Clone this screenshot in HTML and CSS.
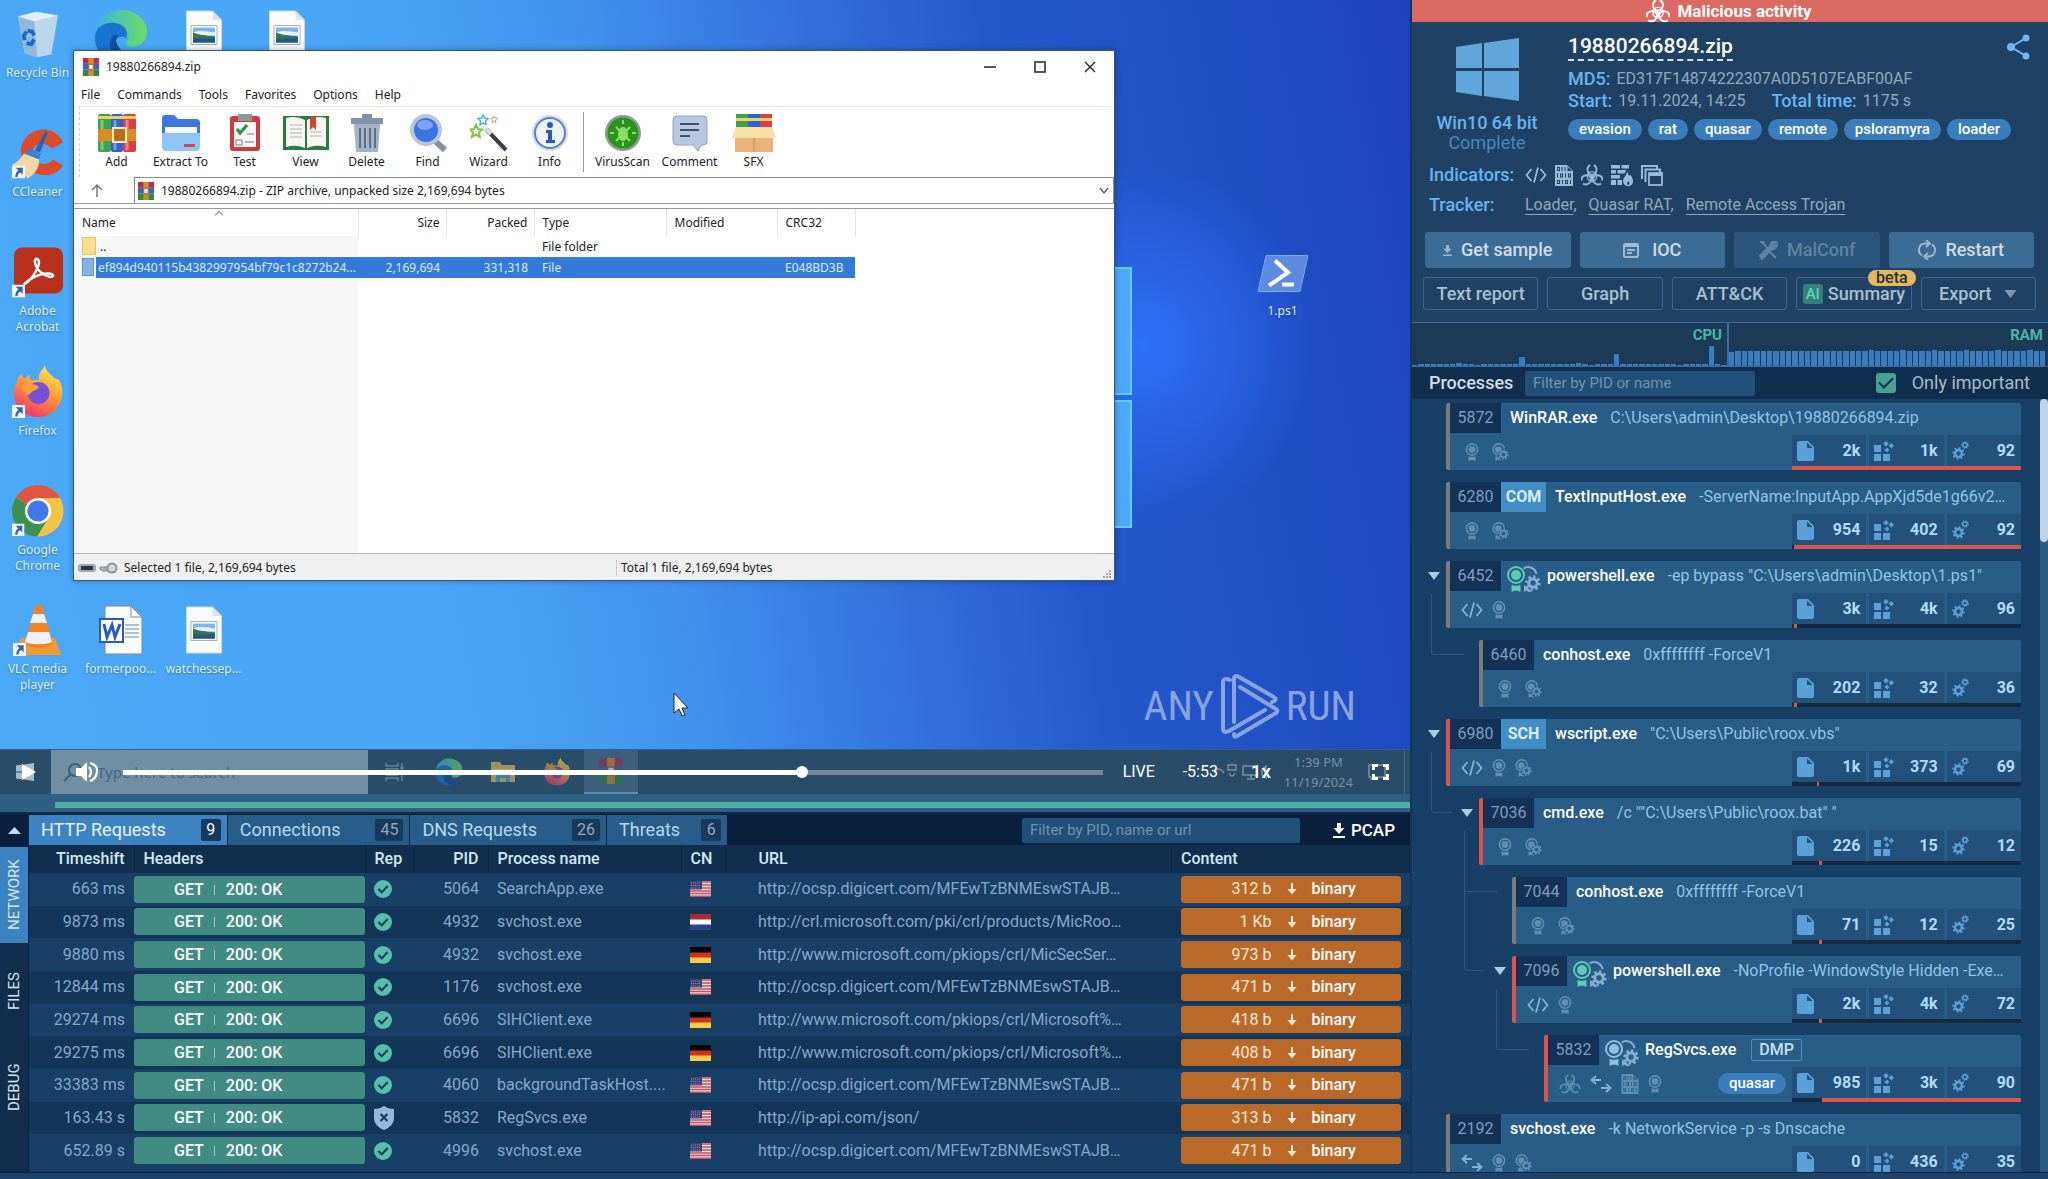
FILE: index.html
```html
<!DOCTYPE html>
<html lang="en">
<head>
    <meta charset="UTF-8">
    <meta name="viewport" content="width=device-width,initial-scale=1">
    <title>19880266894.zip - Malicious activity</title>
    <link rel="stylesheet" href="styles.css">
</head>
<body>
    <!-- shared icons -->
    <svg class="sprite" aria-hidden="true">
        <symbol id="i-medal" viewBox="0 0 14 18">
            <circle cx="7" cy="6.5" r="5.6" fill="none" stroke="currentColor" stroke-width="1.6"/>
            <circle cx="7" cy="6.5" r="3.4" fill="currentColor"/>
            <path d="M3.5 13.2 7 14l3.500-.8V18l-1.500-.8H5L3.500 18z" fill="currentColor"/>
        </symbol>
        <symbol id="i-gear" viewBox="0 0 16 16">
            <circle cx="8" cy="8" r="4.200" fill="none" stroke="currentColor" stroke-width="3"/>
            <circle cx="8" cy="8" r="6.400" fill="none" stroke="currentColor" stroke-width="2.600" pathLength="16" stroke-dasharray="1 1"/>
        </symbol>
        <symbol id="i-medal-gear" viewBox="0 0 17 18">
            <path d="M6 12A5.600 5.600 0 1 1 12.300 5.500" fill="none" stroke="currentColor" stroke-width="1.600"/>
            <path d="M6.500 3.200a3.400 3.400 0 0 1 3.400 2.600L6.300 10A3.400 3.400 0 0 1 6.500 3.200zM3.500 13.500h2.200l1.500 2 1.300 1 .5 1.500L7 17H5l-1.500 1z" fill="currentColor"/>
            <use href="#i-gear" x="6" y="6" width="11" height="11"/>
        </symbol>
        <symbol id="i-signed" viewBox="0 0 34 28">
            <circle cx="9" cy="10" r="8" fill="none" stroke="currentColor" stroke-width="2"/>
            <circle cx="9" cy="10" r="5" fill="currentColor"/>
            <path d="M4.500 20 9 21l4.500-1v7L11 25.800H7L4.500 27z" fill="currentColor"/>
            <g class="signed-gear">
                <path d="M16.500 3.500A8.500 8.500 0 0 1 29.500 9" fill="none" stroke="currentColor" stroke-width="2"/>
                <path d="M17 20l4 3 4 4h-4l-1-1.500L17 27z" fill="currentColor"/>
                <use href="#i-gear" x="18" y="10" width="16" height="16"/>
            </g>
        </symbol>
        <symbol id="i-code" viewBox="0 0 22 18">
            <path d="M6.500 3 1.500 9l5 6M15.500 3l5 6-5 6M13 1.500l-4 15" fill="none" stroke="currentColor" stroke-width="1.800"/>
        </symbol>
        <symbol id="i-arrows" viewBox="0 0 22 18">
            <path d="M6 1 1.500 5 6 9M2 5h9M16 9l4.500 4-4.500 4M20 13h-9" fill="none" stroke="currentColor" stroke-width="1.800"/>
        </symbol>
        <symbol id="i-binary" viewBox="0 0 18 21">
            <path fill-rule="evenodd" d="M0 0h12l6 6v15H0zM2 2v4h3V2zM6.500 2v4h1V2zM9.500 2v4h1V2zM2 8.500v4h1v-4zM5 8.500v4h3v-4zM10 8.500v4h1v-4zM13 8.500v4h3v-4zM2 15v4h3v-4zM7 15v4h1v-4zM10 15v4h3v-4zM15 15v4h1v-4zM3 3h1v2H3zM6 9.500h1v2H6zM14 9.500h1v2h-1zM3 16h1v2H3zM11 16h1v2h-1zM12.500 1.500V6H17z" fill="currentColor"/>
        </symbol>
        <symbol id="i-bio" viewBox="0 0 24 24">
            <g fill="none" stroke="currentColor">
                <path id="bio-arm" d="M10.200 1.200A5.300 5.300 0 0 0 7.200 7c.3 2.600 2.300 4.600 4.800 4.600S16.500 9.600 16.800 7a5.300 5.300 0 0 0-3-5.800" stroke-width="2"/>
                <use href="#bio-arm" transform="rotate(120 12 13.500)"/>
                <use href="#bio-arm" transform="rotate(240 12 13.500)"/>
                <circle cx="12" cy="13.500" r="5.200" stroke-width="1.300"/>
            </g>
            <circle cx="12" cy="13.500" r="2" fill="currentColor"/>
        </symbol>
        <symbol id="i-firewall" viewBox="0 0 22 21">
            <path d="M0 0h9v3.500H0zM10.500 0H18v3.500h-7.500zM0 5h5v3.500H0zM6.500 5H15l-1.500 3.500h-7zM0 10h9v3.500H0zM0 15h5v5H0zM6.500 15H11v5H6.500z" fill="currentColor"/>
            <path d="M16 5.500c.5 3 1.500 4 2.500 5.500l.8-1.200C21 12 22 14 22 16.200c0 2.800-2 4.800-4.800 4.800S12 19 12 16c0-3.800 4-5 4-10.500zM17 20c1.500-.5 2-2 .5-4-1.500 1.500-2 3-.5 4z" fill="currentColor" fill-rule="evenodd"/>
        </symbol>
        <symbol id="i-stack" viewBox="0 0 22 21">
            <path d="M1 14V1h15v2.500M4.500 17V4.500H19V7" fill="none" stroke="currentColor" stroke-width="2"/>
            <rect x="8" y="8" width="13" height="12" fill="none" stroke="currentColor" stroke-width="1.800"/>
            <path d="M8 8h13v3H8z" fill="currentColor"/>
        </symbol>
        <symbol id="i-file" viewBox="0 0 17 20">
            <path d="M2 0h9l6 6v12a2 2 0 0 1-2 2H2a2 2 0 0 1-2-2V2a2 2 0 0 1 2-2zm8 1.500V7h5.500z" fill="currentColor" fill-rule="evenodd"/>
        </symbol>
        <symbol id="i-modules" viewBox="0 0 20 20">
            <path d="M0 4h7v7H0zM0 13h7v7H0zM9 13h7v7H9zM12 0l2.800 2.800L12 5.600 9.200 2.800zM17.300 2 20 4.700l-2.700 2.700-2.700-2.700zM13 6.500l2.500 2.500-2.500 2.500L10.500 9z" fill="currentColor"/>
        </symbol>
        <symbol id="i-gears" viewBox="0 0 17 19">
            <use href="#i-gear" x="0" y="6" width="13" height="13"/>
            <use href="#i-gear" x="9" y="0" width="8" height="8"/>
        </symbol>
        <symbol id="i-caret" viewBox="0 0 12 8"><path d="M0 0h12L6 8z" fill="currentColor"/></symbol>
        <symbol id="i-download" viewBox="0 0 12 15">
            <path d="M4 0h4v5h3.500L6 11 .5 5H4zM0 13h12v2H0z" fill="currentColor"/>
        </symbol>
        <symbol id="i-down" viewBox="0 0 10 12">
            <path d="M4 0h2v6h3.500L5 11.500.5 6H4z" fill="currentColor"/>
        </symbol>
        <symbol id="i-ok" viewBox="0 0 18 18">
            <circle cx="9" cy="9" r="9" fill="#56bfa9"/>
            <path d="M4.500 9l3.200 3.400 6-6.400" fill="none" stroke="#15345a" stroke-width="2"/>
        </symbol>
        <symbol id="i-shield" viewBox="0 0 20 24">
            <path d="M10 0c3 2 6 3 10 3v9c0 6-5 10-10 12C5 22 0 18 0 12V3c4 0 7-1 10-3z" fill="#94bada"/>
            <path d="M6.500 8l7 7M13.500 8l-7 7" stroke="#15345a" stroke-width="2"/>
        </symbol>
        <symbol id="flag-us" viewBox="0 0 21 16">
            <path d="M0 0h21v16H0z" fill="#e9dfe2"/>
            <path d="M0 1h21M0 4h21M0 7h21M0 10h21M0 12.500h21M0 15.300h21" stroke="#c0505c" stroke-width="1.400"/>
            <path d="M0 0h12v8.500H0z" fill="#3c4374"/>
            <path d="M1 2h10M1 4.500h10M1 7h10" stroke="#8b90b4" stroke-dasharray="1 1"/>
        </symbol>
        <symbol id="flag-nl" viewBox="0 0 21 16">
            <path d="M0 0h21v16H0z" fill="#fff"/><path d="M0 0h21v5.500H0z" fill="#a62c36"/><path d="M0 10.500h21V16H0z" fill="#27458a"/>
        </symbol>
        <symbol id="flag-de" viewBox="0 0 21 16">
            <path d="M0 0h21v16H0z" fill="#d0301c"/><path d="M0 0h21v5.500H0z" fill="#000"/><path d="M0 10.500h21V16H0z" fill="#f8cc45"/>
        </symbol>
        <symbol id="d-shortcut" viewBox="0 0 14 14">
            <path d="M0 0h14v14H0z" fill="#f2f6fa"/>
            <path d="M4 2.500h7.500V10L9 7.500C7 8.500 6 10 6 12.500H3.500C3.500 9 5 6.500 7 5.500z" fill="#3464a8"/>
        </symbol>
        <symbol id="d-image" viewBox="0 0 36 47">
            <path d="M.5.500h26l9 9v37H.5z" fill="#fafafa" stroke="#cfd6dd"/>
            <path d="M26.500.500v9h9z" fill="#dfe3e8"/>
            <path d="M5 15h26v19H5z" fill="#fff" stroke="#a9afb8"/>
            <path d="M7 17h22v15H7z" fill="#7db6ef"/>
            <path d="M7 21c5 3 12 4 22 5v6H7z" fill="#39734f"/><path d="M7 28h22v4H7z" fill="#1d5a8c"/>
            <path d="M7 22c8-3 14-1 22 0v3c-8 0-14 0-22-3z" fill="#e8f3fd"/>
        </symbol>
        <symbol id="d-edge" viewBox="0 0 54 54">
            <defs><linearGradient id="edge-g" x1="0" x2="1"><stop offset="0" stop-color="#35b3e6"/><stop offset="1" stop-color="#6fdc62"/></linearGradient></defs>
            <path d="M1 24C3 10 14 1 27 1c15 0 26 10 26 22 0 9-7 15-15 15-6 0-7-3-5-6 4-8-2-15-11-15C13 17 5 20 1 24z" fill="url(#edge-g)"/>
            <path d="M1 27c1-9 10-14 20-13 9 1 14 8 11 15-7-4-13 2-10 10 3 6 12 10 25 6-6 6-12 8-20 8C12 53 0 42 1 27z" fill="#1a73cf"/>
            <path d="M20 26c-8 8-4 22 11 27 8-1 14-4 18-9-12 4-21 0-25-7-2-4-3-8 0-11z" fill="#114f9e"/>
        </symbol>
        <symbol id="d-firefox" viewBox="0 0 50 52">
            <defs><linearGradient id="ff-g" x1=".8" y1="0" x2=".3" y2="1"><stop offset="0" stop-color="#fff14f"/><stop offset=".5" stop-color="#ff9537"/><stop offset="1" stop-color="#f0346b"/></linearGradient></defs>
            <path d="M4 15c1-4 3-6 5-7 0 2 1 4 3 5 2-3 3-4 5-4-1 2 0 4 1 5h8c-1-5 2-10 6-14 1 6 6 8 9 12l5 2c3 6 4 11 3 16-2 13-12 21-24 21C11 51 1 41 1 28c0-5 1-9 3-13z" fill="url(#ff-g)"/>
            <circle cx="25.500" cy="27" r="11" fill="#7a4fd8"/>
            <path d="M8 21c7-4 13-4 18 0-3 4-8 4-10 8-3-1-6-4-8-8z" fill="#f9a13a"/>
        </symbol>
        <symbol id="d-rar" viewBox="0 0 18 20">
            <path d="M0 0h18v6.500H0z" fill="#b0304f"/><path d="M0 6.500h18v6.500H0z" fill="#3a62c8"/><path d="M0 13h18v7H0z" fill="#2b8a43"/>
            <path d="M6 0h6v20H6z" fill="#d98a2c"/><path d="M6.500 7h5v6h-5z" fill="#f4ecd8" stroke="#8b6527"/>
        </symbol>
    </svg>

    <main class="layout">
        <section class="left">
            <div class="screen">
                <div class="wallpaper-pane pane-top"></div>
                <div class="wallpaper-pane pane-bottom"></div>
                <div class="desktop-icons">
                    <div class="shortcut c1 r1">
                        <svg width="40" height="51" viewBox="0 0 42 48"><path d="M0 5 19 0l23 4-7 41-15 3-13-4z" fill="#b9d6ea"/><path d="M0 5l17 5 3 38-13-4z" fill="#8fb9da"/><path d="M0 5 19 0l23 4-25 6z" fill="#dfeef8"/><path d="M10 20l5 1 2 4M17 29l-3 5-5-1M7 30l-1-5 3-4" fill="none" stroke="#1769c4" stroke-width="4"/></svg>
                        <span>Recycle Bin</span>
                    </div>
                    <div class="shortcut c2 r1"><svg width="54" height="54"><use href="#d-edge"/></svg></div>
                    <div class="shortcut c3 r1"><svg width="36" height="50"><use href="#d-image"/></svg></div>
                    <div class="shortcut c4 r1"><svg width="36" height="50"><use href="#d-image"/></svg></div>
                    <div class="shortcut c1 r2">
                        <svg width="52" height="51" viewBox="0 0 52 50"><path d="M51 14C46 3 35-1 25 2 12 6 6 18 10 30c5 17 30 24 41 7l-10-6c-6 8-18 5-20-4-2-8 6-18 19-7z" fill="#dd4b2b"/><path d="M33 3l3 1-8 20-5-2z" fill="#2367b0"/><path d="M17 20l12 5-2 6-14-5z" fill="#3585d0"/><path d="M12 25l15 6c1 8-4 14-11 19L0 36c5-2 9-6 12-11z" fill="#f3d6a4"/><use href="#d-shortcut" y="37" width="13" height="13"/></svg>
                        <span>CCleaner</span>
                    </div>
                    <div class="shortcut c1 r3">
                        <svg width="52" height="51" viewBox="0 0 52 50"><rect x="2" width="49" height="46" rx="8" fill="#b9301c"/><path d="M12 37c8-4 18-21 14-25-5-4-5 10 8 16 8 4 10-2 2-2-9 0-20 6-24 11z" fill="none" stroke="#fff" stroke-width="2.500"/><use href="#d-shortcut" y="37" width="13" height="13"/></svg>
                        <span>Adobe<br>Acrobat</span>
                    </div>
                    <div class="shortcut c16 r3">
                        <svg width="52" height="51" viewBox="0 0 52 42"><path d="M9 4h42l-8 36H1z" fill="#5c8be0" stroke="#7fa9ee"/><path d="M18 9l13 12-19 13" fill="none" stroke="#fff" stroke-width="4"/><path d="M25 33h12" stroke="#fff" stroke-width="4"/></svg>
                        <span>1.ps1</span>
                    </div>
                    <div class="shortcut c1 r4">
                        <svg width="52" height="52" viewBox="0 0 52 52"><use href="#d-firefox" x="1" width="50" height="52"/><use href="#d-shortcut" y="39" width="13" height="13"/></svg>
                        <span>Firefox</span>
                    </div>
                    <div class="shortcut c1 r5">
                        <svg width="54" height="52" viewBox="0 0 54 54"><circle cx="27" cy="27" r="26.500" fill="#f6c344"/><path d="M27 27 4 13A26.500 26.500 0 0 1 50 13.500H27z" fill="#df5640"/><path d="M4 13a26.500 26.500 0 0 0 22 40.500L38 34z" fill="#3c9150"/><circle cx="27" cy="27" r="13.500" fill="#fff"/><circle cx="27" cy="27" r="11" fill="#3f7ae8"/><use href="#d-shortcut" y="40" width="13" height="13"/></svg>
                        <span>Google<br>Chrome</span>
                    </div>
                    <div class="shortcut c1 r6">
                        <svg width="50" height="52" viewBox="0 0 50 52"><path d="M8 34h34l6 17H2z" fill="#f39a33"/><path d="M22 2q4-3 7 0l11 38c-6 5-22 5-28 0z" fill="#f08326"/><path d="M20 10h11l3 9H17zM15 28h21l3 10c-6 3-21 3-27 0z" fill="#eef0f2"/><use href="#d-shortcut" y="39" width="13" height="13"/></svg>
                        <span>VLC media<br>player</span>
                    </div>
                    <div class="shortcut c2 r6">
                        <svg width="44" height="52" viewBox="0 0 44 50"><path d="M6 1h26l11 11v37H6z" fill="#fbfcfd" stroke="#7b8794"/><path d="M32 1v11h11z" fill="#fff" stroke="#7b8794"/><path d="M26 20h14M26 24h14M26 28h14M26 32h14" stroke="#5c86b8"/><path d="M1 14h23v23H1z" fill="#fff" stroke="#2a5cc0" stroke-width="2"/><path d="M5 19l3 13 5-12 3 12 5-13" fill="none" stroke="#2a5cc0" stroke-width="3"/></svg>
                        <span>formerpoo...</span>
                    </div>
                    <div class="shortcut c3 r6"><svg width="36" height="52"><use href="#d-image"/></svg><span>watchessep...</span></div>
                </div>

                <div class="watermark">
                    <span>ANY</span>
                    <svg width="60" height="68" viewBox="0 0 60 68"><path d="M10 8Q3 5 3 11v45q0 6 6 3l36-21M14 50V7q0-5 5-2l35 20q4 3-2 5M20 15l36 22q3 2 0 4L17 64q-3 2-3-2" fill="none" stroke="currentColor" stroke-width="4" stroke-linejoin="round" stroke-linecap="round"/></svg>
                    <span>RUN</span>
                </div>
                <svg class="cursor" width="16" height="26" viewBox="0 0 16 26"><path d="M1 1v20l5-4 3 7 3-1-3-7h6z" fill="#fff" stroke="#222"/></svg>

                <div class="window">
                    <div class="title-bar">
                        <svg width="18" height="18"><use href="#d-rar"/></svg>
                        <span>19880266894.zip</span>
                        <div class="window-buttons">
                            <button aria-label="Minimize"><svg width="12" height="12"><path d="M0 6h12" stroke="#222" stroke-width="1.500"/></svg></button>
                            <button aria-label="Maximize"><svg width="12" height="12"><path d="M1 1h10v10H1z" fill="none" stroke="#222" stroke-width="1.500"/></svg></button>
                            <button aria-label="Close"><svg width="12" height="12"><path d="M1 1l10 10M11 1 1 11" stroke="#222" stroke-width="1.300"/></svg></button>
                        </div>
                    </div>
                    <nav class="menu">
                        <button>File</button><button>Commands</button><button>Tools</button><button>Favorites</button><button>Options</button><button>Help</button>
                    </nav>
                    <div class="toolbar">
                        <button><svg viewBox="0 0 38 38"><rect width="13" height="38" rx="2" fill="#3aa548"/><rect x="13" width="12" height="38" rx="2" fill="#2e63d8"/><rect x="25" width="13" height="38" rx="2" fill="#dd3f48"/><path d="M4 6v30M17 6v30M29 6v30" stroke="#fff" stroke-opacity=".35" stroke-width="3"/><path d="M0 2h38v3H0z" fill="#f0d35c"/><path d="M0 15h38v12H0z" fill="#d98b24"/><path d="M15 14h13v14H15z" fill="#b86d18" stroke="#f6e7c2" stroke-width="2"/></svg>Add</button>
                        <button class="wide"><svg viewBox="0 0 38 38"><path d="M0 4q0-3 3-3h9l4 4h18q4 0 4 4v24H0z" fill="#3d76dd"/><path d="M3 13h32v12H3z" fill="#f5f8fc"/><path d="M0 19h38v14q0 4-4 4H4q-4 0-4-4z" fill="#8ec6f8"/><path d="M22 30h11v3H22z" fill="#d9483a"/></svg>Extract To</button>
                        <button><svg viewBox="0 0 38 38"><rect x="4" y="2" width="30" height="35" rx="3" fill="#cf3b3a"/><path d="M8 8h22v25H8z" fill="#f6f7f8"/><path d="M12 0h14v7H12z" fill="#8e979f"/><path d="M11 15l3 4 7-8" fill="none" stroke="#2c9142" stroke-width="3"/><path d="M21 20h7M10 26h6v5h-6zM19 28h9" fill="none" stroke="#777"/></svg>Test</button>
                        <button><svg class="book" viewBox="0 0 46 38"><path d="M0 2h46v34H0z" fill="#2b7a3f"/><path d="M3 4q10-3 19 2v28q-9-4-19-1zM43 4q-10-3-19 2v28q9-4 19-1z" fill="#f7f5f0"/><path d="M7 11h12M7 15h12M7 19h12M7 23h12M27 18h12M27 22h12" stroke="#b4b4b4"/><path d="M27 3h6v13l-3-3-3 3z" fill="#cf4438"/></svg>View</button>
                        <button><svg viewBox="0 0 38 38"><path d="M6 10h26l-2 28H8z" fill="#a3b3c5"/><path d="M12 14v20M17 14v20M22 14v20M27 14v20" stroke="#5c6f84" stroke-width="2"/><path d="M3 4h32v6H3zM14 0h10v4H14z" fill="#7f92a8"/></svg>Delete</button>
                        <button><svg viewBox="0 0 38 38"><path d="M25 26l11 10" stroke="#8b929c" stroke-width="6"/><circle cx="17" cy="16" r="14" fill="#3b74e6" stroke="#b8c6d6" stroke-width="4"/><ellipse cx="16" cy="11" rx="8" ry="5" fill="#7ba6f5"/></svg>Find</button>
                        <button><svg viewBox="0 0 38 38"><path d="M16 15l20 21" stroke="#3c3f45" stroke-width="4"/><path d="M16 15l5 5" stroke="#d8dadd" stroke-width="4"/><path d="M6 11l2 4 4 .5-3 3 .7 4.500L6 20.500 2 23l1-4.500-3-3 4-.5z" fill="none" stroke="#79c742" stroke-width="2"/><path d="M13 1l1.500 3 3.500.5-2.500 2.500.5 3.500-3-1.500-3 1.500.5-3.500L8 4.500l3.500-.5z" fill="none" stroke="#42b3ea" stroke-width="1.500"/><path d="M24 2l1 2 2.500.3-2 1.700.5 2.500-2-1-2 1 .5-2.500-2-1.700L23 4z" fill="none" stroke="#e98a80"/></svg>Wizard</button>
                        <button><svg viewBox="0 0 38 38"><circle cx="19" cy="19" r="18" fill="#d5dde8"/><circle cx="19" cy="19" r="15" fill="#eef3fb" stroke="#5c7fd0" stroke-width="2"/><circle cx="19" cy="11" r="3" fill="#2c56c4"/><path d="M15 16h6v10h3v3h-9v-3h2v-7h-2z" fill="#2c56c4"/></svg>Info</button>
                        <div class="divider"></div>
                        <button class="wide"><svg viewBox="0 0 38 38"><circle cx="19" cy="19" r="18" fill="#8f9a92"/><circle cx="19" cy="19" r="15.500" fill="#2a9320"/><path d="M19 6v4M19 28v4M6 19h4M28 19h4M12 13l14 14M26 13 12 27" stroke="#8ae063" stroke-width="2"/><ellipse cx="19" cy="20" rx="5" ry="7" fill="#8ae063"/></svg>VirusScan</button>
                        <button class="wide"><svg viewBox="0 0 38 38"><path d="M6 2h26q4 0 4 4v21q0 4-4 4h-2l-3 6-5-6H6q-4 0-4-4V6q0-4 4-4z" fill="#b8c8de" stroke="#8fa3c0"/><path d="M9 10h19M9 16h19M9 22h10" stroke="#43536b" stroke-width="2"/></svg>Comment</button>
                        <button><svg class="book" viewBox="0 0 46 38"><path d="M5 0h12v16H5z" fill="#3aa548"/><path d="M17 0h12v16H17z" fill="#2e63d8"/><path d="M29 0h12v16H29z" fill="#dd3f48"/><path d="M5 4h36v3H5z" fill="#f0d35c"/><path d="M4 20h38v18H4z" fill="#eab37c"/><path d="M5 13h36l4 11H1z" fill="#f9dfa8"/><path d="M23 24v14" stroke="#c98c50"/></svg>SFX</button>
                    </div>
                    <div class="address-row">
                        <button class="up" aria-label="Up"><svg width="12" height="14"><path d="M6 14V2M1 7l5-5 5 5" fill="none" stroke="#777" stroke-width="1.500"/></svg></button>
                        <div class="address">
                            <svg width="18" height="18"><use href="#d-rar"/></svg>
                            <span>19880266894.zip - ZIP archive, unpacked size 2,169,694 bytes</span>
                            <svg class="address-caret" width="10" height="8"><path d="M1 1l4 5 4-5" fill="none" stroke="#555" stroke-width="1.300"/></svg>
                        </div>
                    </div>
                    <div class="file-pane">
                        <table class="files">
                            <colgroup><col class="w-name"><col class="w-size"><col class="w-size"><col class="w-type"><col class="w-modified"><col class="w-crc"></colgroup>
                            <thead>
                                <tr><th class="sorted">Name</th><th class="num">Size</th><th class="num">Packed</th><th>Type</th><th>Modified</th><th>CRC32</th></tr>
                            </thead>
                            <tbody>
                                <tr><td class="file-name"><i class="folder"></i><span>..</span></td><td></td><td></td><td>File folder</td><td></td><td></td></tr>
                                <tr class="selected"><td class="file-name"><i class="doc"></i><span>ef894d940115b4382997954bf79c1c8272b24...</span></td><td class="num">2,169,694</td><td class="num">331,318</td><td>File</td><td></td><td>E048BD3B</td></tr>
                            </tbody>
                        </table>
                    </div>
                    <div class="status-bar">
                        <svg width="40" height="12" viewBox="0 0 40 12"><rect y="2" width="18" height="8" rx="3" fill="#9aa7b4"/><path d="M3 4h12v4H3z" fill="#2c3540"/><path d="M22 5h9v4h-6l-3-2z" fill="#a7adb3" stroke="#7e858c"/><circle cx="34" cy="6" r="4.500" fill="#d5d9dd" stroke="#8b9298" stroke-width="2"/></svg>
                        <span class="status-left">Selected 1 file, 2,169,694 bytes</span>
                        <span class="status-total">Total 1 file, 2,169,694 bytes</span>
                        <svg class="grip" width="10" height="10"><path d="M1 9h8M4 6h5M7 3h2" stroke="#aaa" stroke-width="2" stroke-dasharray="2 1"/></svg>
                    </div>
                </div>
            </div>

            <div class="taskbar">
                <div class="task-items" aria-hidden="true">
                    <svg class="start" width="18" height="18" viewBox="0 0 63 63"><path d="M0 9l26-4v25H0zM28 5l35-5v30H28zM0 33h26v25L0 54zM28 33h35v30l-35-5z" fill="#a9bccb"/></svg>
                    <div class="task-search">
                        <svg width="20" height="20"><circle cx="12" cy="8" r="6" fill="none" stroke="#3f6079" stroke-width="2"/><path d="M8 12l-7 7" stroke="#3f6079" stroke-width="2"/></svg>
                        <span>Type here to search</span>
                    </div>
                    <div class="task-app"><svg width="20" height="18"><path d="M1 0v3h12V0M1 18v-3h12v3M1 6h12v6H1zM17 0v18M15 5h4" fill="none" stroke="#8fa5b7" stroke-width="1.500"/></svg></div>
                    <div class="task-app"><svg width="28" height="28"><use href="#d-edge"/></svg></div>
                    <div class="task-app"><svg width="24" height="22" viewBox="0 0 24 22"><path d="M0 1h9l2 3h13v17H0z" fill="#e9c65a"/><path d="M0 8h24v6H0z" fill="#f7e09a"/><path d="M5 14h14v7h-4v-4H9v4H5z" fill="#3fa4e8"/></svg></div>
                    <div class="task-app"><svg width="28" height="28"><use href="#d-firefox"/></svg></div>
                    <div class="task-app active"><svg width="26" height="26"><use href="#d-rar"/></svg></div>
                    <div class="tray">
                        <svg width="56" height="18" viewBox="0 0 56 18"><path d="M1 10q4-8 10 0M15 2h8v5h-8zM16 10q3 6 6 0M30 3h14v9H30zM34 16h8M38 12v4M49 6l4-3v12l-4-3z" fill="none" stroke="#7891a5" stroke-width="1.500"/></svg>
                        <div class="clock">1:39 PM<br>11/19/2024</div>
                        <svg width="18" height="16"><path d="M1 1h16v12H7l-4 3v-3H1z" fill="none" stroke="#7891a5" stroke-width="1.500"/></svg>
                    </div>
                </div>
                <div class="player">
                    <button aria-label="Play"><svg width="14" height="18"><path d="M0 1l14 8-14 8z" fill="#fff"/></svg></button>
                    <button class="volume" aria-label="Volume"><svg width="22" height="22"><path d="M0 7h5l6-6v20l-6-6H0z" fill="#fff"/><path d="M13 6q4 5 0 10M14 2q8 2 7 9t-7 9" fill="none" stroke="#fff" stroke-width="2.200"/></svg></button>
                    <input type="range" aria-label="Position" min="0" max="1000" value="695">
                    <span class="live">LIVE</span>
                    <span class="time-left">-5:53</span>
                    <button class="speed">1x</button>
                    <button class="fullscreen" aria-label="Fullscreen"><svg width="17" height="16"><path d="M1.500 6V1.500H6M11 1.500h4.500V6M15.500 10v4.500H11M6 14.500H1.500V10" fill="none" stroke="#fff" stroke-width="3"/></svg></button>
                </div>
            </div>
            <div class="timeline"><div class="timeline-bar"></div></div>

            <div class="network">
                <nav class="side-tabs">
                    <button class="collapse" aria-label="Collapse"><svg width="13" height="7"><path d="M0 7h13L6.500 0z" fill="#b5e0fa"/></svg></button>
                    <button class="side-tab active">NETWORK</button>
                    <button class="side-tab">FILES</button>
                    <button class="side-tab">DEBUG</button>
                </nav>
                <div class="network-main">
                    <div class="tabs">
                        <button class="tab active">HTTP Requests <b>9</b></button>
                        <button class="tab">Connections <b>45</b></button>
                        <button class="tab">DNS Requests <b>26</b></button>
                        <button class="tab short">Threats <b>6</b></button>
                        <input class="filter" type="text" aria-label="Filter requests" placeholder="Filter by PID, name or url">
                        <button class="pcap"><svg width="12" height="15"><use href="#i-download"/></svg>PCAP</button>
                    </div>
                    <table class="requests">
                        <colgroup><col class="w-time"><col class="w-headers"><col class="w-rep"><col class="w-pid"><col class="w-process"><col class="w-cn"><col><col class="w-content"></colgroup>
                        <thead>
                            <tr><th class="num">Timeshift</th><th>Headers</th><th>Rep</th><th class="num">PID</th><th>Process name</th><th>CN</th><th class="url">URL</th><th>Content</th></tr>
                        </thead>
                        <tbody>
                            <tr><td class="num">663 ms</td><td class="pill"><div class="status"><span>GET</span><span>200: OK</span></div></td><td><svg width="18" height="18"><use href="#i-ok"/></svg></td><td class="num">5064</td><td>SearchApp.exe</td><td><svg width="21" height="16"><use href="#flag-us"/></svg></td><td class="url">http://ocsp.digicert.com/MFEwTzBNMEswSTAJB…</td><td><button class="content"><span>312 b</span><svg width="10" height="12"><use href="#i-down"/></svg><b>binary</b></button></td></tr>
                            <tr><td class="num">9873 ms</td><td class="pill"><div class="status"><span>GET</span><span>200: OK</span></div></td><td><svg width="18" height="18"><use href="#i-ok"/></svg></td><td class="num">4932</td><td>svchost.exe</td><td><svg width="21" height="16"><use href="#flag-nl"/></svg></td><td class="url">http://crl.microsoft.com/pki/crl/products/MicRoo…</td><td><button class="content"><span>1 Kb</span><svg width="10" height="12"><use href="#i-down"/></svg><b>binary</b></button></td></tr>
                            <tr><td class="num">9880 ms</td><td class="pill"><div class="status"><span>GET</span><span>200: OK</span></div></td><td><svg width="18" height="18"><use href="#i-ok"/></svg></td><td class="num">4932</td><td>svchost.exe</td><td><svg width="21" height="16"><use href="#flag-de"/></svg></td><td class="url">http://www.microsoft.com/pkiops/crl/MicSecSer…</td><td><button class="content"><span>973 b</span><svg width="10" height="12"><use href="#i-down"/></svg><b>binary</b></button></td></tr>
                            <tr><td class="num">12844 ms</td><td class="pill"><div class="status"><span>GET</span><span>200: OK</span></div></td><td><svg width="18" height="18"><use href="#i-ok"/></svg></td><td class="num">1176</td><td>svchost.exe</td><td><svg width="21" height="16"><use href="#flag-us"/></svg></td><td class="url">http://ocsp.digicert.com/MFEwTzBNMEswSTAJB…</td><td><button class="content"><span>471 b</span><svg width="10" height="12"><use href="#i-down"/></svg><b>binary</b></button></td></tr>
                            <tr><td class="num">29274 ms</td><td class="pill"><div class="status"><span>GET</span><span>200: OK</span></div></td><td><svg width="18" height="18"><use href="#i-ok"/></svg></td><td class="num">6696</td><td>SIHClient.exe</td><td><svg width="21" height="16"><use href="#flag-de"/></svg></td><td class="url">http://www.microsoft.com/pkiops/crl/Microsoft%…</td><td><button class="content"><span>418 b</span><svg width="10" height="12"><use href="#i-down"/></svg><b>binary</b></button></td></tr>
                            <tr><td class="num">29275 ms</td><td class="pill"><div class="status"><span>GET</span><span>200: OK</span></div></td><td><svg width="18" height="18"><use href="#i-ok"/></svg></td><td class="num">6696</td><td>SIHClient.exe</td><td><svg width="21" height="16"><use href="#flag-de"/></svg></td><td class="url">http://www.microsoft.com/pkiops/crl/Microsoft%…</td><td><button class="content"><span>408 b</span><svg width="10" height="12"><use href="#i-down"/></svg><b>binary</b></button></td></tr>
                            <tr><td class="num">33383 ms</td><td class="pill"><div class="status"><span>GET</span><span>200: OK</span></div></td><td><svg width="18" height="18"><use href="#i-ok"/></svg></td><td class="num">4060</td><td>backgroundTaskHost....</td><td><svg width="21" height="16"><use href="#flag-us"/></svg></td><td class="url">http://ocsp.digicert.com/MFEwTzBNMEswSTAJB…</td><td><button class="content"><span>471 b</span><svg width="10" height="12"><use href="#i-down"/></svg><b>binary</b></button></td></tr>
                            <tr><td class="num">163.43 s</td><td class="pill"><div class="status"><span>GET</span><span>200: OK</span></div></td><td><svg width="20" height="24"><use href="#i-shield"/></svg></td><td class="num">5832</td><td>RegSvcs.exe</td><td><svg width="21" height="16"><use href="#flag-us"/></svg></td><td class="url">http://ip-api.com/json/</td><td><button class="content"><span>313 b</span><svg width="10" height="12"><use href="#i-down"/></svg><b>binary</b></button></td></tr>
                            <tr><td class="num">652.89 s</td><td class="pill"><div class="status"><span>GET</span><span>200: OK</span></div></td><td><svg width="18" height="18"><use href="#i-ok"/></svg></td><td class="num">4996</td><td>svchost.exe</td><td><svg width="21" height="16"><use href="#flag-us"/></svg></td><td class="url">http://ocsp.digicert.com/MFEwTzBNMEswSTAJB…</td><td><button class="content"><span>471 b</span><svg width="10" height="12"><use href="#i-down"/></svg><b>binary</b></button></td></tr>
                        </tbody>
                    </table>
                </div>
            </div>
        </section>

        <aside class="sidebar">
            <div class="verdict"><svg width="24" height="24"><use href="#i-bio"/></svg>Malicious activity</div>
            <div class="summary">
                <div class="os">
                    <svg width="63" height="63" viewBox="0 0 63 63"><path d="M0 9l26-4v25H0zM28 5l35-5v30H28zM0 33h26v25L0 54zM28 33h35v30l-35-5z" fill="#60a6db"/></svg>
                    <strong>Win10 64 bit</strong>
                    <span>Complete</span>
                </div>
                <div class="info">
                    <div class="info-top">
                        <h1>19880266894.zip</h1>
                        <button class="share" aria-label="Share"><svg width="23" height="26"><path d="M19 4 4 13l15 9" fill="none" stroke="#6cb8f5" stroke-width="2"/><circle cx="19" cy="4" r="3.500" fill="#6cb8f5"/><circle cx="4" cy="13" r="4" fill="#6cb8f5"/><circle cx="19" cy="22" r="3.500" fill="#6cb8f5"/></svg></button>
                    </div>
                    <p><b>MD5:</b> <span>ED317F14874222307A0D5107EABF00AF</span></p>
                    <p><b>Start:</b> <span>19.11.2024, 14:25</span> <b class="total">Total time:</b> <span>1175 s</span></p>
                    <div class="tags"><span class="tag">evasion</span><span class="tag">rat</span><span class="tag">quasar</span><span class="tag">remote</span><span class="tag">psloramyra</span><span class="tag">loader</span></div>
                </div>
            </div>
            <div class="meta">
                <b>Indicators:</b>
                <div class="indicators">
                    <svg width="22" height="20"><use href="#i-code"/></svg>
                    <svg width="18" height="21"><use href="#i-binary"/></svg>
                    <svg width="22" height="22"><use href="#i-bio"/></svg>
                    <svg width="22" height="21"><use href="#i-firewall"/></svg>
                    <svg width="22" height="21"><use href="#i-stack"/></svg>
                </div>
                <b>Tracker:</b>
                <div class="tracker"><a href="#">Loader</a>, <a href="#">Quasar RAT</a>, <a href="#">Remote Access Trojan</a></div>
            </div>
            <div class="actions">
                <button><svg width="9" height="11"><use href="#i-download" width="9" height="11"/></svg>Get sample</button>
                <button class="ioc"><svg width="16" height="15"><rect x="1" y="1" width="14" height="13" rx="1" fill="none" stroke="currentColor" stroke-width="2"/><path d="M1 3h14M4 7h8M4 10h5" stroke="currentColor" stroke-width="2"/></svg>IOC</button>
                <button disabled><svg width="20" height="20"><path d="M2 2l3 0 4 6M9 9l9 9M18 2q-5-1-6 4L2 16l2 3L14 9q5 0 5-5l-3 2-2-2z" fill="currentColor" stroke="currentColor" stroke-width="2"/></svg>MalConf</button>
                <button><svg width="18" height="20"><path d="M10 3.500H7A6.500 6.500 0 0 0 4 15.500M8 16.500h3A6.500 6.500 0 0 0 14 4.500M8 0l4 3.500L8 7M10 13l-4 3.500 4 3.500" fill="none" stroke="currentColor" stroke-width="1.800"/></svg>Restart</button>
            </div>
            <div class="reports">
                <button>Text report</button>
                <button>Graph</button>
                <button>ATT&amp;CK</button>
                <button class="ai"><i>AI</i>Summary<em>beta</em></button>
                <button>Export<svg width="13" height="8" viewBox="0 0 12 8" class="export-caret"><use href="#i-caret"/></svg></button>
            </div>
            <div class="charts">
                <div class="chart" id="cpu"><span>CPU</span></div>
                <div class="chart" id="ram"><span>RAM</span></div>
            </div>
            <div class="process-head">
                <h2>Processes</h2>
                <input class="filter" type="text" aria-label="Filter processes" placeholder="Filter by PID or name">
                <label><input type="checkbox" checked>Only important</label>
            </div>
            <div class="process-pane">
                <ul class="processes">
                    <li class="process">
                        <div class="line"><span class="pid">5872</span><b>WinRAR.exe</b><span class="cmd">C:\Users\admin\Desktop\19880266894.zip</span></div>
                        <div class="marks"><svg width="14" height="18"><use href="#i-medal"/></svg><svg width="17" height="18"><use href="#i-medal-gear"/></svg></div>
                        <div class="stats"><span><svg width="17" height="20"><use href="#i-file"/></svg>2k</span><span><svg width="20" height="20"><use href="#i-modules"/></svg>1k</span><span><svg width="17" height="19"><use href="#i-gears"/></svg>92</span><div class="life"><i style="left: 0%; width: 100%"></i></div></div>
                    </li>
                    <li class="process">
                        <div class="line"><span class="pid">6280</span><span class="kind">COM</span><b>TextInputHost.exe</b><span class="cmd">-ServerName:InputApp.AppXjd5de1g66v2…</span></div>
                        <div class="marks"><svg width="14" height="18"><use href="#i-medal"/></svg><svg width="17" height="18"><use href="#i-medal-gear"/></svg></div>
                        <div class="stats"><span><svg width="17" height="20"><use href="#i-file"/></svg>954</span><span><svg width="20" height="20"><use href="#i-modules"/></svg>402</span><span><svg width="17" height="19"><use href="#i-gears"/></svg>92</span><div class="life"><i style="left: 1%; width: 99%"></i></div></div>
                    </li>
                    <li class="process">
                        <svg class="caret" width="12" height="8"><use href="#i-caret"/></svg>
                        <div class="line"><span class="pid">6452</span><svg class="signed green" width="34" height="28"><use href="#i-signed"/></svg><b>powershell.exe</b><span class="cmd">-ep bypass "C:\Users\admin\Desktop\1.ps1"</span></div>
                        <div class="marks code-first"><svg class="bright" width="22" height="18"><use href="#i-code"/></svg><svg width="14" height="18"><use href="#i-medal"/></svg></div>
                        <div class="stats"><span><svg width="17" height="20"><use href="#i-file"/></svg>3k</span><span><svg width="20" height="20"><use href="#i-modules"/></svg>4k</span><span><svg width="17" height="19"><use href="#i-gears"/></svg>96</span><div class="life"><i style="left: 1%; width: 1%"></i></div></div>
                    </li>
                    <li class="process level-1 leaf">
                        <div class="line"><span class="pid">6460</span><b>conhost.exe</b><span class="cmd">0xffffffff -ForceV1</span></div>
                        <div class="marks"><svg width="14" height="18"><use href="#i-medal"/></svg><svg width="17" height="18"><use href="#i-medal-gear"/></svg></div>
                        <div class="stats"><span><svg width="17" height="20"><use href="#i-file"/></svg>202</span><span><svg width="20" height="20"><use href="#i-modules"/></svg>32</span><span><svg width="17" height="19"><use href="#i-gears"/></svg>36</span><div class="life"><i style="left: 1%; width: 1%"></i></div></div>
                    </li>
                    <li class="process danger">
                        <svg class="caret" width="12" height="8"><use href="#i-caret"/></svg>
                        <div class="line"><span class="pid">6980</span><span class="kind">SCH</span><b>wscript.exe</b><span class="cmd">"C:\Users\Public\roox.vbs"</span></div>
                        <div class="marks code-first"><svg class="bright" width="22" height="18"><use href="#i-code"/></svg><svg width="14" height="18"><use href="#i-medal"/></svg><svg width="17" height="18"><use href="#i-medal-gear"/></svg></div>
                        <div class="stats"><span><svg width="17" height="20"><use href="#i-file"/></svg>1k</span><span><svg width="20" height="20"><use href="#i-modules"/></svg>373</span><span><svg width="17" height="19"><use href="#i-gears"/></svg>69</span><div class="life"><i style="left: 11%; width: 1%"></i></div></div>
                    </li>
                    <li class="process danger level-1">
                        <svg class="caret" width="12" height="8"><use href="#i-caret"/></svg>
                        <div class="line"><span class="pid">7036</span><b>cmd.exe</b><span class="cmd">/c ""C:\Users\Public\roox.bat" "</span></div>
                        <div class="marks"><svg width="14" height="18"><use href="#i-medal"/></svg><svg width="17" height="18"><use href="#i-medal-gear"/></svg></div>
                        <div class="stats"><span><svg width="17" height="20"><use href="#i-file"/></svg>226</span><span><svg width="20" height="20"><use href="#i-modules"/></svg>15</span><span><svg width="17" height="19"><use href="#i-gears"/></svg>12</span><div class="life"><i style="left: 12%; width: 1%"></i></div></div>
                    </li>
                    <li class="process level-2 leaf">
                        <div class="line"><span class="pid">7044</span><b>conhost.exe</b><span class="cmd">0xffffffff -ForceV1</span></div>
                        <div class="marks"><svg width="14" height="18"><use href="#i-medal"/></svg><svg width="17" height="18"><use href="#i-medal-gear"/></svg></div>
                        <div class="stats"><span><svg width="17" height="20"><use href="#i-file"/></svg>71</span><span><svg width="20" height="20"><use href="#i-modules"/></svg>12</span><span><svg width="17" height="19"><use href="#i-gears"/></svg>25</span><div class="life"><i style="left: 12%; width: 1%"></i></div></div>
                    </li>
                    <li class="process danger level-2 next">
                        <svg class="caret" width="12" height="8"><use href="#i-caret"/></svg>
                        <div class="line"><span class="pid">7096</span><svg class="signed green" width="34" height="28"><use href="#i-signed"/></svg><b>powershell.exe</b><span class="cmd">-NoProfile -WindowStyle Hidden -Exe…</span></div>
                        <div class="marks code-first"><svg class="bright" width="22" height="18"><use href="#i-code"/></svg><svg width="14" height="18"><use href="#i-medal"/></svg></div>
                        <div class="stats"><span><svg width="17" height="20"><use href="#i-file"/></svg>2k</span><span><svg width="20" height="20"><use href="#i-modules"/></svg>4k</span><span><svg width="17" height="19"><use href="#i-gears"/></svg>72</span><div class="life"><i style="left: 12%; width: 1%"></i></div></div>
                    </li>
                    <li class="process danger level-3 leaf">
                        <div class="line"><span class="pid">5832</span><svg class="signed" width="34" height="28"><use href="#i-signed"/></svg><b>RegSvcs.exe</b><span class="dump">DMP</span></div>
                        <div class="marks code-first"><svg width="22" height="20"><use href="#i-bio"/></svg><svg class="bright" width="22" height="18"><use href="#i-arrows"/></svg><svg width="18" height="20"><use href="#i-binary"/></svg><svg width="14" height="18"><use href="#i-medal"/></svg></div>
                        <span class="tag">quasar</span>
                        <div class="stats"><span><svg width="17" height="20"><use href="#i-file"/></svg>985</span><span><svg width="20" height="20"><use href="#i-modules"/></svg>3k</span><span><svg width="17" height="19"><use href="#i-gears"/></svg>90</span><div class="life"><i style="left: 13%; width: 87%"></i></div></div>
                    </li>
                    <li class="process">
                        <div class="line"><span class="pid">2192</span><b>svchost.exe</b><span class="cmd">-k NetworkService -p -s Dnscache</span></div>
                        <div class="marks code-first"><svg class="bright" width="22" height="18"><use href="#i-arrows"/></svg><svg width="14" height="18"><use href="#i-medal"/></svg><svg width="17" height="18"><use href="#i-medal-gear"/></svg></div>
                        <div class="stats"><span><svg width="17" height="20"><use href="#i-file"/></svg>0</span><span><svg width="20" height="20"><use href="#i-modules"/></svg>436</span><span><svg width="17" height="19"><use href="#i-gears"/></svg>35</span><div class="life"><i style="left: 0%; width: 100%"></i></div></div>
                    </li>
                </ul>
                <div class="scrollbar"><div class="scroll-thumb"></div></div>
            </div>
        </aside>
    </main>
    <footer></footer>

    <script>
        // load samples in percent of the chart height, one bar each
        const cpu = Array(50).fill(4);
        Object.assign(cpu, { 0: 2, 7: 7, 10: 2, 17: 20, 26: 8, 28: 2, 32: 27, 42: 2, 47: 46, 49: 2 });
        const ram = Array(50).fill(36);
        Object.assign(ram, { 0: 32, 22: 38, 27: 38, 32: 38, 37: 38, 42: 38, 47: 38 });

        function drawBars(id, samples) {
            const chart = document.getElementById(id);
            samples.forEach(value => {
                const bar = document.createElement('i');
                bar.style.height = value + '%';
                chart.appendChild(bar);
            });
        }
        drawBars('cpu', cpu);
        drawBars('ram', ram);
    </script>
</body>
</html>
```
FILE: styles.css
```css
* {
    box-sizing: border-box;
}
body {
    display: flex;
    flex-direction: column;
    height: 100vh;
    margin: 0;
    overflow: hidden;
    background: #1b4268;
    color: #9cc8ee;
    font-family: Roboto, sans-serif;
    font-size: 16px;
    line-height: 20px;
}
button {
    display: flex;
    align-items: center;
    justify-content: center;
    margin: 0;
    padding: 0;
    border: 0;
    background: none;
    color: inherit;
    font: inherit;
    white-space: nowrap;
}
svg {
    display: block;
    flex: none;
}
b, strong {
    font-weight: 500;
}
h1, h2, p, ul {
    margin: 0;
    padding: 0;
}
table {
    border-collapse: collapse;
    table-layout: fixed;
}
th, td {
    padding: 0;
    text-align: left;
    font-weight: inherit;
    white-space: nowrap;
    overflow: hidden;
}
th.num, td.num {
    text-align: right;
}
.sprite {
    position: absolute;
    width: 0;
    height: 0;
}
.layout {
    flex: 1;
    min-height: 0;
    display: grid;
    grid-template-columns: minmax(0, 1fr) 638px;
}
footer {
    height: 7px;
    border-top: 1px solid #0c2440;
}
.left {
    display: flex;
    flex-direction: column;
    min-height: 0;
}

/* recorded desktop */
.screen {
    position: relative;
    flex: 1;
    min-height: 0;
    overflow: hidden;
    background:
        radial-gradient(circle 180px at 81% 46%, rgba(46, 116, 255, 0.9), rgba(46, 116, 255, 0)),
        linear-gradient(80deg, #4ba9f8 0%, #4aa6f6 30%, #4293ed 45%, #3272dc 60%, #2459cc 72%, #2050c4 85%, #1c42bd 100%);
    font-family: "Noto Sans", sans-serif;
    font-size: 12px;
    line-height: 16px;
}
.wallpaper-pane {
    position: absolute;
    left: 1060px;
    width: 72px;
    height: 128px;
    background: #4fa8fb;
    border: 2px solid #5fd0fb;
}
.pane-top {
    top: 267px;
}
.pane-bottom {
    top: 400px;
}
.desktop-icons {
    position: absolute;
    top: 9px;
    left: -4px;
    display: grid;
    grid-template-columns: repeat(16, 83px);
    grid-template-rows: repeat(6, 119px);
}
.shortcut {
    display: flex;
    flex-direction: column;
    align-items: center;
    gap: 5px;
    color: #dcf3fa;
    text-align: center;
    text-shadow: 0 1px 2px rgba(0, 0, 0, 0.4);
    white-space: nowrap;
}
.c1 { grid-column: 1; }
.c2 { grid-column: 2; }
.c3 { grid-column: 3; }
.c4 { grid-column: 4; }
.c16 { grid-column: 16; }
.r1 { grid-row: 1; }
.r2 { grid-row: 2; }
.r3 { grid-row: 3; }
.r4 { grid-row: 4; }
.r5 { grid-row: 5; }
.r6 { grid-row: 6; }
.watermark {
    position: absolute;
    right: 54px;
    bottom: 9px;
    display: flex;
    align-items: center;
    gap: 6px;
    color: #87a3e0;
    font-family: "Roboto Condensed", "Liberation Sans Narrow", Roboto, sans-serif;
    font-size: 41px;
    line-height: 64px;
}
.cursor {
    position: absolute;
    left: 673px;
    top: 692px;
}

/* archiver window */
.window {
    position: absolute;
    top: 50px;
    left: 73px;
    display: flex;
    flex-direction: column;
    width: 1042px;
    height: 531px;
    border: 1px solid #35567c;
    background: #fff;
    box-shadow: 0 0 6px rgba(0, 0, 0, 0.3);
    color: #222;
}
.title-bar {
    display: flex;
    align-items: center;
    gap: 6px;
    height: 32px;
    padding: 0 18px 0 8px;
}
.window-buttons {
    display: flex;
    gap: 38px;
    margin-left: auto;
}
.menu {
    display: flex;
    align-items: center;
    gap: 17px;
    height: 24px;
    padding: 0 7px;
    border-bottom: 1px solid #e8e8e8;
}
.toolbar {
    display: flex;
    align-items: center;
    height: 70px;
    margin-left: 5px;
    padding-left: 6px;
    border-left: 1px dashed #ccc;
}
.toolbar button {
    flex-direction: column;
    gap: 2px;
    width: 61px;
}
.toolbar .wide {
    width: 67px;
}
.toolbar svg {
    width: 38px;
    height: 38px;
}
.toolbar .book {
    width: 46px;
}
.divider {
    width: 1px;
    height: 60px;
    margin: 0 5px 0 3px;
    background: #999;
}
.address-row {
    display: flex;
    height: 27px;
    border-bottom: 1px solid #999;
}
.up {
    width: 60px;
    padding-right: 14px;
}
.address {
    flex: 1;
    display: flex;
    align-items: center;
    gap: 6px;
    padding: 0 4px 0 2px;
    border: 1px solid #8a8a8a;
    border-bottom: 0;
}
.address-caret {
    margin-left: auto;
}
.file-pane {
    flex: 1;
    border-top: 1px solid #999;
    margin-top: 4px;
    background: linear-gradient(#f7f7f7, #f7f7f7) no-repeat 0 27px / 284px 100%;
}
.file-pane th {
    height: 27px;
    padding: 0 8px;
    border-right: 1px solid #e3e3e3;
    background: #fff;
}
.file-pane td {
    height: 21px;
    padding: 0 8px;
}
.file-pane th.num, .file-pane td.num {
    padding-right: 6px;
}
/* sort arrow above the column title */
.sorted {
    position: relative;
}
.sorted::after {
    content: "";
    position: absolute;
    left: 50%;
    top: 3px;
    width: 5px;
    height: 5px;
    border: solid #888;
    border-width: 1px 0 0 1px;
    transform: rotate(45deg);
}
.files {
    width: 781px;
}
.w-name { width: 284px; }
.w-size { width: 88px; }
.w-type { width: 132px; }
.w-modified { width: 111px; }
.w-crc { width: 78px; }
.files .file-name {
    display: flex;
    gap: 2px;
    padding: 0 0 0 8px;
}
.file-name i {
    width: 14px;
    height: 18px;
    margin-top: 1px;
    background: #f7df8c;
    border: 1px solid #e5c564;
}
.file-name .doc {
    background: #86b3e2;
    border-color: #5f94cf;
}
.file-name span {
    flex: 1;
    padding: 2px;
    line-height: 17px;
}
.selected td {
    background: #347bd9;
    color: #d8ebfb;
}
.selected .file-name {
    background: none;
}
.selected .file-name span {
    background: #347bd9;
}
.status-bar {
    display: flex;
    align-items: center;
    height: 27px;
    padding: 2px 2px 0 4px;
    border-top: 1px solid #b5b5b5;
    background: #f0f0f0;
}
.status-left {
    width: 498px;
    padding-left: 6px;
}
.status-total {
    padding-left: 4px;
    border-left: 1px solid #ccc;
}
.grip {
    margin: 10px 0 0 auto;
}

/* taskbar with the player over it */
.taskbar {
    position: relative;
    height: 45px;
    background: #294c68;
    border-top: 1px solid #30618a;
}
.task-items {
    display: flex;
    height: 44px;
    color: #7891a5;
    font-family: "Noto Sans", sans-serif;
}
.start {
    margin: 13px 17px 0 16px;
}
.task-search {
    display: flex;
    align-items: center;
    gap: 14px;
    width: 317px;
    padding-left: 12px;
    background: #718ea3;
    color: #486880;
    font-size: 15px;
}
.task-app {
    display: flex;
    align-items: center;
    justify-content: center;
    width: 54px;
    opacity: 0.6;
}
.task-app.active {
    background: #4a6c88;
    border-bottom: 2px solid #7cb5e4;
}
.tray {
    display: flex;
    align-items: center;
    gap: 15px;
    margin-left: auto;
    margin-right: 5px;
    padding-right: 18px;
    border-right: 1px solid #46657d;
}
.clock {
    font-size: 13px;
    line-height: 20px;
    text-align: center;
}
.player {
    position: absolute;
    inset: 0;
    display: flex;
    align-items: center;
    padding: 0 21px 0 22px;
    color: #fff;
}
.volume {
    margin-left: 40px;
}
.player input {
    flex: 1;
    appearance: none;
    height: 12px;
    margin: 0 20px 0 25px;
    background: none;
}
.player input::-webkit-slider-runnable-track {
    height: 5px;
    background: linear-gradient(90deg, #fff 69%, #73869c 69%);
}
.player input::-webkit-slider-thumb {
    appearance: none;
    width: 12px;
    height: 12px;
    margin-top: -4px;
    border-radius: 50%;
    background: #fff;
}
.live {
    width: 60px;
}
.time-left {
    width: 68px;
}
.speed {
    font-size: 19px;
    font-weight: 500;
}
.fullscreen {
    margin-left: 101px;
}
.timeline {
    height: 20px;
    padding: 8px 0 0 55px;
    background: #2f6083;
    border-bottom: 2px solid #0f2c4a;
}
.timeline-bar {
    height: 6px;
    background: #4fae9f;
}

/* network panel */
.network {
    display: flex;
    height: 358px;
    background: #183f65;
}
.side-tabs {
    display: flex;
    flex-direction: column;
    width: 29px;
    background: #112c4d;
    border-right: 1px solid #0a2341;
}
.collapse {
    height: 33px;
    background: #0a1f3e;
}
.side-tab {
    height: 96px;
    writing-mode: vertical-rl;
    transform: rotate(180deg);
    color: #d8e6f0;
    font-size: 15px;
}
.side-tab.active {
    background: #3c84c1;
}
.network-main {
    flex: 1;
    min-width: 0;
}
.tabs {
    display: flex;
    align-items: center;
    height: 31px;
    padding: 1px 15px 0 0;
    background: #0a1f3e;
}
.tab {
    gap: 35px;
    height: 30px;
    padding: 0 6px 0 12px;
    margin-right: 1px;
    background: #275d88;
    color: #b4daf2;
    font-size: 18px;
}
.tab.short {
    gap: 21px;
}
.tab.active {
    background: #3c84c1;
    color: #e6f3fc;
}
.tab b {
    min-width: 20px;
    padding: 1px 5px;
    background: #17395c;
    color: #92a9bd;
    font-size: 16px;
    font-weight: 400;
    border-radius: 2px;
}
.tab.active b {
    color: #fff;
}
.filter {
    height: 25px;
    padding: 0 8px;
    border: 0;
    border-radius: 2px;
    background: #214f78;
    color: #fff;
    font: 15px/20px Roboto, sans-serif;
}
.filter::placeholder {
    color: #7192ae;
}
.tabs .filter {
    width: 278px;
    margin-left: auto;
}
.pcap {
    gap: 6px;
    margin-left: 33px;
    color: #fff;
    font-size: 17px;
    font-weight: 500;
}
.requests {
    width: 100%;
    height: 322px;
    color: #86a9c8;
}
.w-time { width: 105px; }
.w-headers { width: 231px; }
.w-rep { width: 48px; }
.w-pid { width: 75px; }
.w-process { width: 193px; }
.w-cn { width: 44px; }
.w-content { width: 238px; }
.requests th, .requests td {
    padding: 0 9px;
}
.requests th {
    height: 28px;
    border-right: 1px solid #0d2645;
    background: #112e4e;
    color: #d3e9f5;
    font-weight: 500;
}
.requests tbody tr:nth-child(even) {
    background: #133558;
}
.requests .url {
    padding-left: 33px;
}
.requests .pill {
    padding: 0;
}
.status {
    display: flex;
    gap: 22px;
    height: 27px;
    padding-left: 40px;
    border-radius: 3px;
    background: #408c82;
    color: #fff;
    font-weight: 500;
    line-height: 27px;
}
.status span + span {
    position: relative;
}
.status span + span::before {
    content: "";
    position: absolute;
    left: -12px;
    top: 9px;
    width: 1px;
    height: 10px;
    background: #9cc6bf;
}
.content {
    display: grid;
    grid-template-columns: 91px 10px 1fr;
    column-gap: 15px;
    width: 100%;
    height: 27px;
    border-radius: 3px;
    background: #bb6929;
    color: #fbe9d8;
    text-align: left;
}
.content span {
    text-align: right;
}
.content b {
    color: #fff;
}

/* sidebar */
.sidebar {
    display: flex;
    flex-direction: column;
    min-height: 0;
    border-left: 2px solid #12355a;
    background: #1f4264;
    color: #92a9bd;
}
.verdict {
    display: flex;
    align-items: center;
    justify-content: center;
    gap: 7px;
    height: 22px;
    padding-right: 2px;
    background: #db6a62;
    color: #fff;
    font-size: 17px;
    font-weight: 700;
}
.summary {
    display: flex;
    padding: 10px 12px 0 15px;
}
.os {
    display: flex;
    flex-direction: column;
    align-items: center;
    width: 120px;
    padding-top: 6px;
    color: #4a88bb;
    font-size: 18px;
}
.os strong {
    margin-top: 12px;
    color: #68b4f2;
}
.info {
    flex: 1;
    padding-left: 21px;
}
.info-top {
    display: flex;
    justify-content: space-between;
    height: 36px;
    padding-right: 6px;
}
.share {
    height: 30px;
}
.info h1 {
    height: 29px;
    border-bottom: 2px dashed #d5e0e8;
    color: #fff;
    font-size: 21px;
    font-weight: 500;
    line-height: 28px;
}
.info p {
    display: flex;
    gap: 6px;
    line-height: 22px;
}
.info b, .meta b {
    color: #68b4f2;
    font-size: 18px;
}
.info .total {
    margin-left: 20px;
}
.tags {
    display: flex;
    gap: 6px;
    margin-top: 7px;
}
.tag {
    height: 21px;
    padding: 0 11px;
    border-radius: 11px;
    background: #3b7cbc;
    color: #fff;
    font-size: 15px;
    font-weight: 500;
    line-height: 21px;
}
.meta {
    display: grid;
    grid-template-columns: 96px 1fr;
    align-items: center;
    grid-auto-rows: 30px;
    margin: 7px 0 0 17px;
}
.indicators {
    display: flex;
    align-items: center;
    gap: 8px;
    color: #98bbd8;
}
.tracker a {
    color: inherit;
    text-underline-offset: 4px;
}
.tracker a + a {
    margin-left: 8px;
}
.actions {
    display: grid;
    grid-template-columns: repeat(4, 1fr);
    gap: 9px;
    margin: 12px 14px 0 13px;
}
.actions button {
    gap: 9px;
    height: 36px;
    border-radius: 3px;
    background: #3c6c94;
    color: #cfdeea;
    font-size: 18px;
    font-weight: 500;
}
.actions svg {
    color: #9fb9ce;
}
.actions .ioc {
    gap: 13px;
}
.actions button:disabled, .actions button:disabled svg {
    color: #5f83a1;
}
.actions button:disabled {
    background: #2b557a;
}
.reports {
    display: grid;
    grid-template-columns: repeat(5, 1fr);
    gap: 9px;
    margin: 9px 12px 12px 11px;
}
.reports button {
    position: relative;
    height: 33px;
    border: 1px solid #3a6a93;
    border-radius: 3px;
    color: #a9bfd1;
    font-size: 18px;
    font-weight: 500;
}
.ai i {
    margin-right: 5px;
    padding: 0 3px;
    border-radius: 3px;
    background: #35807f;
    color: #5fd6bd;
    font-size: 15px;
    font-style: normal;
}
.ai em {
    position: absolute;
    top: -8px;
    right: -5px;
    height: 16px;
    padding: 0 8px;
    border-radius: 8px;
    background: #e3b95c;
    color: #26303a;
    font-size: 16px;
    font-style: normal;
    line-height: 15px;
}
.export-caret {
    margin-left: 13px;
    color: #7f9ab0;
}
.charts {
    display: grid;
    grid-template-columns: 315px 1fr;
    height: 45px;
    border-top: 1px solid #3a6f9d;
    border-bottom: 1px solid #3a6f9d;
    background: #1b3a58;
}
.chart {
    position: relative;
    display: flex;
    align-items: flex-end;
    gap: 1px;
}
.chart + .chart {
    padding-right: 3px;
    border-left: 2px solid #3a6f9d;
}
.chart span {
    position: absolute;
    top: 2px;
    right: 5px;
    color: #4eb5a3;
    font-size: 15px;
    font-weight: 700;
}
.chart i {
    flex: 1;
    background: #3b7cbc;
}
.process-head {
    display: flex;
    align-items: center;
    height: 32px;
    padding: 0 18px 0 17px;
    background: #112e4e;
    font-size: 18px;
}
.process-head h2 {
    width: 96px;
    color: #d5dee6;
    font-size: 18px;
    font-weight: 500;
}
.process-head .filter {
    width: 230px;
}
.process-head label {
    display: flex;
    align-items: center;
    gap: 16px;
    margin-left: auto;
    color: #a9bccb;
}
.process-head input[type="checkbox"] {
    appearance: none;
    width: 20px;
    height: 20px;
    margin: 0;
    border-radius: 3px;
    background: #46a193;
    display: grid;
    place-items: center;
}
.process-head input[type="checkbox"]:checked::before {
    content: "";
    width: 6px;
    height: 12px;
    margin-bottom: 4px;
    border: solid #112e4e;
    border-width: 0 2px 2px 0;
    transform: rotate(45deg);
}
.process-pane {
    position: relative;
    flex: 1;
    min-height: 0;
    overflow: hidden;
    background: #183f65;
}
.processes {
    display: flex;
    flex-direction: column;
    gap: 12px;
    padding: 4px 27px 0 34px;
    list-style: none;
}
.process {
    position: relative;
    display: grid;
    grid-template-columns: 1fr auto 229px;
    grid-template-rows: 30px 37px;
    border-left: 4px solid #7b7b7b;
    border-radius: 2px;
    background: #275d86;
}
.process.danger {
    border-left-color: #d9544b;
}
.level-1 { margin-left: 33px; }
.level-2 { margin-left: 66px; }
.level-3 { margin-left: 98px; }
.caret {
    position: absolute;
    left: -22px;
    top: 11px;
    color: #a5cede;
}
/* branch to the parent process */
.level-1::before, .level-2::before, .level-3::before {
    content: "";
    position: absolute;
    left: -52px;
    top: -46px;
    width: 20px;
    height: 60px;
    border: solid #2a5780;
    border-width: 0 0 1px 1px;
    border-bottom-left-radius: 4px;
}
.leaf::before {
    width: 32px;
}
.next::before {
    top: -66px;
    height: 80px;
}
.line {
    grid-column: 1 / -1;
    display: flex;
    align-items: center;
    min-width: 0;
    height: 30px;
    padding-right: 6px;
    white-space: nowrap;
}
.line b {
    margin-left: 9px;
    color: #fff;
}
.line .signed + b {
    margin-left: 6px;
}
.pid {
    flex: none;
    width: 51px;
    height: 30px;
    background: #143156;
    color: #7e9fbd;
    line-height: 30px;
    text-align: center;
}
.kind {
    flex: none;
    width: 45px;
    height: 30px;
    background: #418ec5;
    color: #dcedf8;
    font-weight: 700;
    line-height: 30px;
    text-align: center;
}
.cmd {
    margin-left: 13px;
    overflow: hidden;
    color: #93c4ea;
    text-overflow: ellipsis;
}
.signed {
    margin: 5px 0 0 6px;
    color: #93c0e2;
}
.signed.green {
    color: #5ccdb4;
}
.signed-gear {
    color: #86aed0;
}
.dump {
    height: 22px;
    margin-left: 15px;
    padding: 0 7px;
    border: 1px solid #4791cb;
    border-radius: 2px;
    color: #c4e1f5;
    font-weight: 500;
}
.marks {
    display: flex;
    align-items: center;
    gap: 13px;
    padding: 0 0 0 15px;
    color: #5f8fb5;
}
.marks.code-first {
    gap: 9px;
    padding-left: 11px;
}
.marks .bright {
    color: #86b3d5;
}
.process > .tag {
    align-self: center;
    margin-right: 6px;
}
.stats {
    grid-column: 3;
    display: grid;
    grid-template-columns: repeat(3, 1fr);
    grid-template-rows: 31px 4px;
    column-gap: 3px;
    align-content: end;
}
.stats span {
    display: flex;
    align-items: center;
    justify-content: space-between;
    padding: 0 6px 0 5px;
    background: #24507c;
    color: #b4dcf8;
    font-weight: 700;
}
.stats svg {
    color: #5ba0d6;
}
.life {
    position: relative;
    grid-column: 1 / -1;
    background: #152a3e;
}
.life i {
    position: absolute;
    top: 0;
    bottom: 0;
    background: #d9544b;
}
.scrollbar {
    position: absolute;
    top: 0;
    right: 0;
    width: 8px;
    height: 100%;
    background: #2d5b80;
}
.scroll-thumb {
    height: 143px;
    border-radius: 4px;
    background: #bdd5e5;
}
```
